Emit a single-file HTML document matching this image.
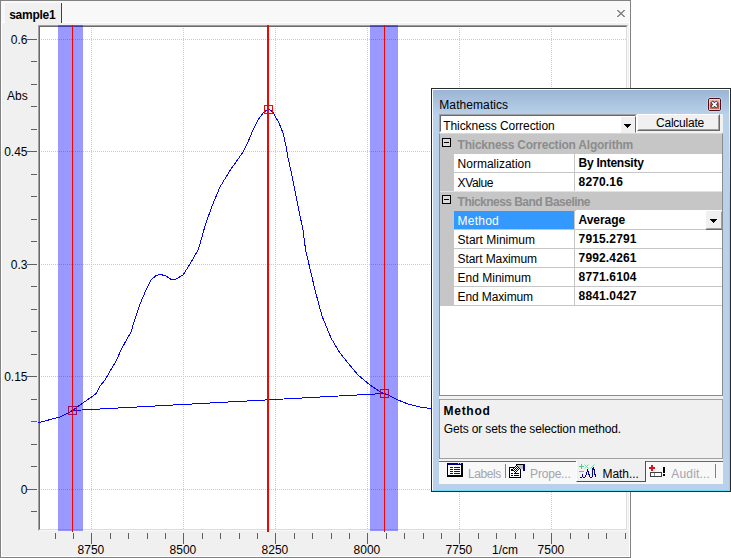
<!DOCTYPE html>
<html><head><meta charset="utf-8"><title>sample1</title>
<style>
html,body{margin:0;padding:0;background:#fff;}
body{width:731px;height:558px;overflow:hidden;position:relative;font-family:"Liberation Sans",sans-serif;font-size:12px;color:#000;}
div{box-sizing:border-box;}
#win{position:absolute;left:0;top:0;width:631px;height:558px;background:#f0f0f0;border:1px solid #828282;box-shadow:inset 1px 0 0 #fff,inset -1px 0 0 #fff,inset 0 -1px 0 #fff;}
#strip{position:absolute;left:0;top:0;width:629px;height:21px;background:#f8f8f8;}
#pageline{position:absolute;left:0;top:21px;width:629px;height:1px;background:#fff;}
#tab{position:absolute;left:4px;top:2px;width:56px;height:20px;background:#f0f0f0;font-weight:bold;line-height:14px;padding:5px 0 0 4.2px;letter-spacing:-0.26px;}
#tabsep{position:absolute;left:60px;top:2px;width:1px;height:20px;background:#404040;}
#close{position:absolute;}
#plot{position:absolute;left:38px;top:25px;width:590px;height:506px;border:1px solid;border-color:#a0a0a0 #f8f8f8 #f8f8f8 #a0a0a0;}
#plot div{width:100%;height:100%;background:#fff;border:1px solid;border-color:#696969 #dcdcdc #dcdcdc #696969;}
.al{position:absolute;font-size:12px;line-height:14px;white-space:nowrap;color:#000;}
#panel{position:absolute;left:431px;top:88px;width:300px;height:404px;background:#b9d1ea;border:1px solid #2a2a2a;}
#panel:after{content:"";position:absolute;left:0;top:0;right:0;bottom:0;border:1px solid;border-color:#fff transparent #6cdcf8 #fff;pointer-events:none;}
#panel:before{content:"";position:absolute;right:0;top:0;width:1px;height:401px;background:linear-gradient(#fff,#e0f8ff 8%,#6cdcf8 30%);z-index:2;}
#ptitle{position:absolute;left:0;top:0;width:298px;height:26px;background:linear-gradient(#9ab4d3,#b9d1ea);}
#ptext{position:absolute;left:7.3px;top:9px;line-height:14px;letter-spacing:0.08px;}
#pclose{position:absolute;left:276px;top:9px;width:13px;height:13px;border:1px solid #4a1020;border-radius:2px;background:linear-gradient(#f2c0b2 0,#e8a090 38%,#c84830 42%,#d26048 82%,#f0a890 100%);box-shadow:0 0 0 1px rgba(200,225,250,.55);}
#pclose:after{content:"";position:absolute;left:0;top:0;right:0;bottom:0;border:1px solid rgba(255,215,205,.75);}
#cont{position:absolute;left:7px;top:25px;width:284px;height:370px;background:#f2f2f2;}
#combo{position:absolute;left:0;top:0;width:198px;height:19px;background:#fff;border:1px solid;border-color:#a0a0a0 #fff #fff #a0a0a0;}
#combo .in{position:absolute;left:0;top:0;right:0;bottom:0;border:1px solid;border-color:#696969 transparent transparent #696969;}
#combo .t{position:absolute;left:3.2px;top:4px;line-height:14px;letter-spacing:-0.06px;white-space:nowrap;}
#combo .b{position:absolute;left:180px;top:1px;width:16px;height:17px;background:#f0f0f0;border:1px solid;border-color:#fff #696969 #f0f0f0 #fff;}
.arrow{position:absolute;}
#calc{position:absolute;left:198px;top:0;width:83px;height:17px;background:#f0f0f0;border:1px solid;border-color:#fff #696969 #696969 #fff;text-align:center;line-height:14px;padding:1px 0 0 3px;letter-spacing:-0.25px;}
#calc:after{content:"";position:absolute;left:0;top:0;right:0;bottom:0;border:1px solid;border-color:transparent #a0a0a0 #a0a0a0 transparent;}
#grid{position:absolute;left:0;top:19px;width:284px;height:263px;background:#fff;border:1px solid #8a8a8a;border-top-color:#d8d8d8;overflow:hidden;}
#gmargin{position:absolute;left:0;top:0;width:14px;height:172px;background:#c6c6c6;}
.cat{position:absolute;left:0;width:282px;height:20px;background:#c6c6c6;}
.cat:before{content:"";position:absolute;left:0;top:0;width:100%;height:1px;background:#e2e2e2;}
.cat.first:before{display:none;}
#edit{position:absolute;left:136px;top:76px;width:129px;height:1px;background:#fff;}
.cat .box{position:absolute;left:2px;top:4px;width:7px;height:7px;border:1px solid #000;background:#dcdcdc;}
.cat .box:after{content:"";position:absolute;left:1px;top:3px;width:5px;height:1px;background:#000;}
.cat .ct{position:absolute;left:17.6px;top:4px;line-height:14px;font-weight:bold;color:#8c8c8c;white-space:nowrap;}
.prow{position:absolute;left:14px;width:268px;height:19px;border-bottom:1px solid #c6c6c6;}
.pl{position:absolute;left:0;top:0;width:121px;height:18px;padding:3px 0 0 3.6px;line-height:14px;white-space:nowrap;border-right:1px solid #c6c6c6;}
.pl.sel{background:#3399ff;color:#fff;}
.pv{position:absolute;left:121px;top:0;height:18px;padding:2px 0 0 3.6px;line-height:14px;font-weight:bold;white-space:nowrap;}
#ddb{position:absolute;left:265px;top:76px;width:18px;height:20px;background:#f0f0f0;border:1px solid;border-color:#fff #696969 #696969 #fff;}
#ddb:after{content:"";position:absolute;left:0;top:0;right:0;bottom:0;border:1px solid;border-color:transparent #a0a0a0 #a0a0a0 transparent;}
#desc{position:absolute;left:0;top:285px;width:284px;height:60px;background:#f0f0f0;border:1px solid #a0a0a0;}
#desc b{position:absolute;left:3.6px;top:4px;line-height:14px;letter-spacing:0.7px;}
#desc span{position:absolute;left:3.8px;top:22px;line-height:14px;white-space:nowrap;letter-spacing:-0.145px;}
#tabs{position:absolute;left:0;top:347px;width:284px;height:23px;background:#f8f8f8;border-top:1px solid #696969;}
#tabs .tt{position:absolute;top:5px;line-height:14px;color:#a4a4ac;white-space:nowrap;}
#tabs .sep{position:absolute;top:2px;width:1px;height:14px;background:#808080;}
#tabs .ic{position:absolute;}
#atab{position:absolute;left:137px;top:-1px;width:70px;height:21px;background:#f0f0f0;border-right:1px solid #505050;border-bottom:1px solid #505050;border-left:1px solid #fff;}
</style></head><body>
<div id="win">
 <div id="strip"></div><div id="pageline"></div>
 <div id="tab">sample1</div><div id="tabsep"></div>
 <svg id="close" style="left:616px;top:9px" width="8" height="7" viewBox="0 0 8 7"><path d="M0.3 0L7.7 7M7.7 0L0.3 7" stroke="#707070" stroke-width="1.2" fill="none"/></svg>
</div>
<div id="plot"><div></div></div>
<svg width="631" height="558" style="position:absolute;left:0;top:0" shape-rendering="crispEdges">
<line x1="91.5" y1="28" x2="91.5" y2="529" stroke="#cccccc" stroke-dasharray="1,1"/>
<line x1="183.5" y1="28" x2="183.5" y2="529" stroke="#cccccc" stroke-dasharray="1,1"/>
<line x1="275.5" y1="28" x2="275.5" y2="529" stroke="#cccccc" stroke-dasharray="1,1"/>
<line x1="367.5" y1="28" x2="367.5" y2="529" stroke="#cccccc" stroke-dasharray="1,1"/>
<line x1="459.5" y1="28" x2="459.5" y2="529" stroke="#cccccc" stroke-dasharray="1,1"/>
<line x1="551.5" y1="28" x2="551.5" y2="529" stroke="#cccccc" stroke-dasharray="1,1"/>
<line x1="41" y1="39.5" x2="626" y2="39.5" stroke="#cccccc" stroke-dasharray="1,1"/>
<line x1="41" y1="151.5" x2="626" y2="151.5" stroke="#cccccc" stroke-dasharray="1,1"/>
<line x1="41" y1="264.5" x2="626" y2="264.5" stroke="#cccccc" stroke-dasharray="1,1"/>
<line x1="41" y1="376.5" x2="626" y2="376.5" stroke="#cccccc" stroke-dasharray="1,1"/>
<line x1="41" y1="489.5" x2="626" y2="489.5" stroke="#cccccc" stroke-dasharray="1,1"/>
<rect x="27" y="39" width="10" height="1" fill="#606060"/>
<rect x="31" y="61" width="6" height="1" fill="#606060"/>
<rect x="31" y="84" width="6" height="1" fill="#606060"/>
<rect x="31" y="106" width="6" height="1" fill="#606060"/>
<rect x="31" y="129" width="6" height="1" fill="#606060"/>
<rect x="27" y="151" width="10" height="1" fill="#606060"/>
<rect x="31" y="174" width="6" height="1" fill="#606060"/>
<rect x="31" y="196" width="6" height="1" fill="#606060"/>
<rect x="31" y="219" width="6" height="1" fill="#606060"/>
<rect x="31" y="241" width="6" height="1" fill="#606060"/>
<rect x="27" y="264" width="10" height="1" fill="#606060"/>
<rect x="31" y="286" width="6" height="1" fill="#606060"/>
<rect x="31" y="309" width="6" height="1" fill="#606060"/>
<rect x="31" y="331" width="6" height="1" fill="#606060"/>
<rect x="31" y="354" width="6" height="1" fill="#606060"/>
<rect x="27" y="376" width="10" height="1" fill="#606060"/>
<rect x="31" y="399" width="6" height="1" fill="#606060"/>
<rect x="31" y="421" width="6" height="1" fill="#606060"/>
<rect x="31" y="444" width="6" height="1" fill="#606060"/>
<rect x="31" y="466" width="6" height="1" fill="#606060"/>
<rect x="27" y="489" width="10" height="1" fill="#606060"/>
<rect x="31" y="511" width="6" height="1" fill="#606060"/>
<rect x="55" y="533" width="1" height="6" fill="#606060"/>
<rect x="73" y="533" width="1" height="6" fill="#606060"/>
<rect x="91" y="533" width="1" height="11" fill="#606060"/>
<rect x="110" y="533" width="1" height="6" fill="#606060"/>
<rect x="128" y="533" width="1" height="6" fill="#606060"/>
<rect x="147" y="533" width="1" height="6" fill="#606060"/>
<rect x="165" y="533" width="1" height="6" fill="#606060"/>
<rect x="183" y="533" width="1" height="11" fill="#606060"/>
<rect x="202" y="533" width="1" height="6" fill="#606060"/>
<rect x="220" y="533" width="1" height="6" fill="#606060"/>
<rect x="239" y="533" width="1" height="6" fill="#606060"/>
<rect x="257" y="533" width="1" height="6" fill="#606060"/>
<rect x="275" y="533" width="1" height="11" fill="#606060"/>
<rect x="294" y="533" width="1" height="6" fill="#606060"/>
<rect x="312" y="533" width="1" height="6" fill="#606060"/>
<rect x="331" y="533" width="1" height="6" fill="#606060"/>
<rect x="349" y="533" width="1" height="6" fill="#606060"/>
<rect x="367" y="533" width="1" height="11" fill="#606060"/>
<rect x="386" y="533" width="1" height="6" fill="#606060"/>
<rect x="404" y="533" width="1" height="6" fill="#606060"/>
<rect x="423" y="533" width="1" height="6" fill="#606060"/>
<rect x="441" y="533" width="1" height="6" fill="#606060"/>
<rect x="459" y="533" width="1" height="11" fill="#606060"/>
<rect x="478" y="533" width="1" height="6" fill="#606060"/>
<rect x="496" y="533" width="1" height="6" fill="#606060"/>
<rect x="515" y="533" width="1" height="6" fill="#606060"/>
<rect x="533" y="533" width="1" height="6" fill="#606060"/>
<rect x="551" y="533" width="1" height="11" fill="#606060"/>
<rect x="570" y="533" width="1" height="6" fill="#606060"/>
<rect x="588" y="533" width="1" height="6" fill="#606060"/>
<rect x="606" y="533" width="1" height="6" fill="#606060"/>
<rect x="625" y="533" width="1" height="6" fill="#606060"/>
<polyline points="37.5,423.2 40.0,422.4 50.0,419.6 60.0,417.0 68.4,413.0 72.4,410.4 82.0,403.6 90.0,398.0 96.0,393.6 100.0,386.0 105.0,380.0 116.0,361.0 122.0,348.0 131.0,332.0 135.0,319.0 140.0,304.0 146.0,290.0 151.0,280.0 156.0,275.6 160.4,274.4 166.0,276.0 171.0,279.4 176.0,279.0 183.0,275.0 190.0,264.0 198.0,250.0 200.0,244.0 205.0,226.0 212.0,206.0 220.0,187.0 230.0,170.5 243.0,152.0 248.0,142.0 253.0,130.0 258.0,120.0 263.0,113.0 266.0,110.6 269.0,109.0 273.0,112.4 279.0,123.0 283.0,133.0 286.0,146.0 288.0,158.0 291.0,171.0 298.0,206.0 303.0,230.0 305.6,250.0 309.0,264.4 315.0,290.0 322.0,316.0 331.0,338.0 340.0,353.0 348.0,363.0 358.0,375.0 370.0,385.0 380.0,391.6 384.5,393.5 398.0,400.0 408.0,404.0 420.0,407.0 431.0,408.6 445.0,410.0" fill="none" stroke="#0000ff" stroke-width="1"/>
<line x1="72.5" y1="410.5" x2="384.5" y2="393.5" stroke="#0000ff" stroke-width="1"/>
<rect x="58" y="25" width="25" height="506" fill="#0000ff" fill-opacity="0.4"/>
<rect x="370" y="25" width="28" height="506" fill="#0000ff" fill-opacity="0.4"/>
<rect x="72" y="25" width="1" height="507" fill="#ff0000"/>
<rect x="384" y="25" width="1" height="507" fill="#ff0000"/>
<rect x="267" y="25" width="2" height="507" fill="#ff0000"/>
<rect x="68.5" y="406.5" width="8" height="8" fill="none" stroke="#960f5f"/>
<rect x="380.5" y="389.5" width="8" height="8" fill="none" stroke="#960f5f"/>
<rect x="264.5" y="105.5" width="8" height="8" fill="none" stroke="#ff0000"/>
</svg>
<div class="al" style="left:0;width:27.5px;text-align:right;top:33px">0.6</div>
<div class="al" style="left:0;width:27.5px;text-align:right;top:145px">0.45</div>
<div class="al" style="left:0;width:27.5px;text-align:right;top:258px">0.3</div>
<div class="al" style="left:0;width:27.5px;text-align:right;top:370px">0.15</div>
<div class="al" style="left:0;width:27.5px;text-align:right;top:483px">0</div>
<div class="al" style="left:7px;top:89px">Abs</div>
<div class="al" style="left:60.9px;width:60px;text-align:center;top:543px">8750</div>
<div class="al" style="left:152.9px;width:60px;text-align:center;top:543px">8500</div>
<div class="al" style="left:244.9px;width:60px;text-align:center;top:543px">8250</div>
<div class="al" style="left:336.9px;width:60px;text-align:center;top:543px">8000</div>
<div class="al" style="left:428.9px;width:60px;text-align:center;top:543px">7750</div>
<div class="al" style="left:520.9px;width:60px;text-align:center;top:543px">7500</div>
<div class="al" style="left:475px;width:60px;text-align:center;top:543px">1/cm</div>
<div id="panel">
 <div id="ptitle"></div>
 <div id="ptext">Mathematics</div>
 <div id="pclose"><svg width="11" height="11" viewBox="0 0 11 11" style="position:absolute;left:0;top:0"><path d="M3.8 3.8L7.2 7.2M7.2 3.8L3.8 7.2" stroke="#3a4050" stroke-width="3.4" stroke-linecap="square"/><path d="M3.8 3.8L7.2 7.2M7.2 3.8L3.8 7.2" stroke="#fff" stroke-width="1.7" stroke-linecap="square"/></svg></div>
 <div id="cont">
  <div id="combo"><div class="in"></div><div class="t">Thickness Correction</div><div class="b"><svg class="arrow" style="left:3px;top:7px" width="7" height="4" shape-rendering="crispEdges"><rect x="0" y="0" width="7" height="1"/><rect x="1" y="1" width="5" height="1"/><rect x="2" y="2" width="3" height="1"/><rect x="3" y="3" width="1" height="1"/></svg></div></div>
  <div id="calc">Calculate</div>
  <div id="grid">
   <div id="gmargin"></div>
   <div class="cat first" style="top:0px"><span class="box"></span><span class="ct" style="letter-spacing:-0.23px">Thickness Correction Algorithm</span></div>
<div class="prow" style="top:20px"><div class="pl"><span style="letter-spacing:0px">Normalization</span></div><div class="pv"><span style="letter-spacing:-0.25px">By Intensity</span></div></div>
<div class="prow" style="top:39px"><div class="pl"><span style="letter-spacing:-0.4px">XValue</span></div><div class="pv"><span style="letter-spacing:0.14px">8270.16</span></div></div>
<div class="cat" style="top:57px"><span class="box"></span><span class="ct" style="letter-spacing:-0.54px">Thickness Band Baseline</span></div>
<div class="prow" style="top:77px"><div class="pl sel"><span style="letter-spacing:0.23px">Method</span></div><div class="pv"><span style="letter-spacing:-0.07px">Average</span></div></div>
<div class="prow" style="top:96px"><div class="pl"><span style="letter-spacing:0px">Start Minimum</span></div><div class="pv"><span style="letter-spacing:0.14px">7915.2791</span></div></div>
<div class="prow" style="top:115px"><div class="pl"><span style="letter-spacing:-0.1px">Start Maximum</span></div><div class="pv"><span style="letter-spacing:0.14px">7992.4261</span></div></div>
<div class="prow" style="top:134px"><div class="pl"><span style="letter-spacing:0px">End Minimum</span></div><div class="pv"><span style="letter-spacing:0.14px">8771.6104</span></div></div>
<div class="prow" style="top:153px"><div class="pl"><span style="letter-spacing:-0.12px">End Maximum</span></div><div class="pv"><span style="letter-spacing:0.14px">8841.0427</span></div></div>
   <div id="edit"></div><div id="ddb"><svg class="arrow" style="left:4px;top:8px" width="7" height="4" shape-rendering="crispEdges"><rect x="0" y="0" width="7" height="1"/><rect x="1" y="1" width="5" height="1"/><rect x="2" y="2" width="3" height="1"/><rect x="3" y="3" width="1" height="1"/></svg></div>
  </div>
  <div id="desc"><b>Method</b><span>Gets or sets the selection method.</span></div>
  <div id="tabs">
   <div id="atab"></div>
   <svg class="ic" style="left:8px;top:1px" width="16" height="14" shape-rendering="crispEdges"><rect x="0" y="0" width="16" height="14" fill="#000"/><rect x="1" y="0" width="14" height="2" fill="#000080"/><rect x="11" y="0" width="1" height="1" fill="#c0c0c0"/><rect x="13" y="0" width="1" height="1" fill="#c0c0c0"/><rect x="1" y="2" width="13" height="10" fill="#fff"/><rect x="3" y="4" width="3" height="1" fill="#0000ff"/><rect x="7" y="4" width="6" height="1" fill="#0000ff"/><rect x="3" y="6" width="3" height="1" fill="#0000ff"/><rect x="7" y="6" width="6" height="1" fill="#0000ff"/><rect x="3" y="8" width="3" height="1" fill="#0000ff"/><rect x="7" y="8" width="6" height="1" fill="#0000ff"/><rect x="3" y="10" width="3" height="1" fill="#0000ff"/><rect x="7" y="10" width="6" height="1" fill="#0000ff"/></svg><div class="tt" style="left:29.1px;letter-spacing:-0.45px">Labels</div><div class="sep" style="left:66px"></div>
   <svg class="ic" style="left:70px;top:2px" width="16" height="15" shape-rendering="crispEdges"><rect x="0.5" y="3.5" width="11" height="10" fill="#fff" stroke="#000"/><polygon points="4,4 8,0 14,0 14,5 10,5 8,8" fill="#fff"/><polygon points="8,1 14,1 14,5 10,5" fill="#c0c0c0"/><rect x="3" y="5" width="1" height="1" fill="#000"/><rect x="4" y="6" width="1" height="1" fill="#000"/><rect x="5" y="7" width="1" height="1" fill="#000"/><rect x="6" y="8" width="1" height="1" fill="#000"/><rect x="4" y="4" width="1" height="1" fill="#000"/><rect x="5" y="5" width="1" height="1" fill="#000"/><rect x="6" y="6" width="1" height="1" fill="#000"/><rect x="7" y="7" width="1" height="1" fill="#000"/><rect x="5" y="3" width="1" height="1" fill="#000"/><rect x="6" y="4" width="1" height="1" fill="#000"/><rect x="7" y="5" width="1" height="1" fill="#000"/><rect x="8" y="6" width="1" height="1" fill="#000"/><rect x="6" y="2" width="1" height="1" fill="#000"/><rect x="7" y="3" width="1" height="1" fill="#000"/><rect x="8" y="4" width="1" height="1" fill="#000"/><rect x="9" y="5" width="1" height="1" fill="#000"/><rect x="7" y="1" width="1" height="1" fill="#000"/><rect x="8" y="2" width="1" height="1" fill="#000"/><rect x="9" y="3" width="1" height="1" fill="#000"/><rect x="10" y="4" width="1" height="1" fill="#000"/><rect x="7" y="0" width="7" height="1" fill="#000"/><rect x="14" y="0" width="2" height="7" fill="#000090"/><rect x="2" y="5" width="2" height="2" fill="#000"/><rect x="2" y="9" width="2" height="1" fill="#000"/><rect x="5" y="9" width="5" height="1" fill="#000"/><rect x="2" y="11" width="2" height="1" fill="#000"/><rect x="5" y="11" width="5" height="1" fill="#000"/></svg><div class="tt" style="left:91.1px;letter-spacing:-0.2px">Prope...</div>
   <svg class="ic" style="left:140px;top:2px" width="17" height="15"><g stroke="#4ccf8c" stroke-width="1" fill="none" shape-rendering="crispEdges"><path d="M0 2.5H5M2.5 0V5M0 7.5H5"/></g><g stroke="#6fd9a0" stroke-width="1" fill="none"><path d="M5.5 0.5L9.5 4.5M9.5 0.5L5.5 4.5M15.5 0.5L11.5 4.5"/></g><g shape-rendering="crispEdges"><rect x="1" y="13" width="2" height="1" fill="#00008c"/><rect x="3" y="10" width="1" height="3" fill="#00008c"/><rect x="4" y="13" width="2" height="1" fill="#00008c"/><rect x="6" y="11" width="1" height="2" fill="#00008c"/><rect x="7" y="8" width="1" height="3" fill="#00008c"/><rect x="8" y="5" width="1" height="3" fill="#00008c"/><rect x="9" y="7" width="1" height="4" fill="#00008c"/><rect x="10" y="10" width="1" height="3" fill="#00008c"/><rect x="11" y="13" width="2" height="1" fill="#00008c"/><rect x="13" y="4" width="1" height="9" fill="#00008c"/><rect x="14" y="3" width="1" height="3" fill="#00008c"/><rect x="15" y="5" width="1" height="6" fill="#00008c"/><rect x="16" y="10" width="1" height="3" fill="#00008c"/></g></svg><div class="tt" style="left:163.6px;color:#000;letter-spacing:-0.08px">Math...</div>
   <svg class="ic" style="left:210px;top:3px" width="17" height="13" shape-rendering="crispEdges"><rect x="0" y="2" width="6" height="2" fill="#e01018"/><rect x="2" y="0" width="2" height="6" fill="#e01018"/><rect x="1.5" y="7.5" width="11" height="4" fill="#fff" stroke="#404040"/><rect x="5" y="8" width="1" height="3" fill="#909090"/><rect x="14" y="2" width="2" height="6" fill="#000"/><rect x="14" y="9" width="2" height="2" fill="#000"/></svg><div class="tt" style="left:232.2px;letter-spacing:0.2px">Audit...</div><div class="sep" style="left:276px"></div>
  </div>
 </div>
</div>
</body></html>
